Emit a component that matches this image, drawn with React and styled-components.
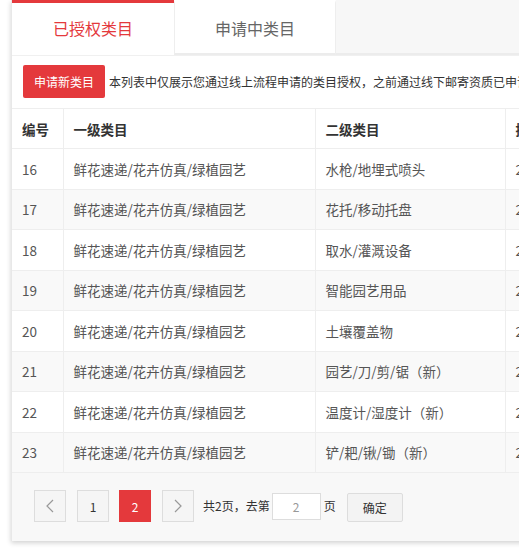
import React from "react";
import styled, { createGlobalStyle } from "styled-components";

const GlobalStyle = createGlobalStyle`
  html, body {
    margin: 0;
    padding: 0;
    background: #fff;
    overflow: hidden;
  }
  body {
    font-family: "Noto Sans CJK SC", "Microsoft YaHei", sans-serif;
    color: #333;
  }
`;

const Page = styled.div`
  width: 519px;
  height: 550px;
  overflow: hidden;
`;

const Panel = styled.div`
  margin-left: 11px;
  width: 640px;
  height: 541px;
  background: #fff;
  border-left: 1px solid #e8e8e8;
  box-shadow: 0 2px 5px rgba(0, 0, 0, 0.18);
  display: flex;
  flex-direction: column;
`;

const TabBar = styled.div`
  display: flex;
  height: 55px;
  background: #f7f7f7;
`;

const Tab = styled.div`
  width: 162px;
  box-sizing: border-box;
  display: flex;
  align-items: center;
  justify-content: center;
  background: #fff;
  font-size: 16px;
  color: ${(p) => (p.$active ? "#e4393c" : "#666")};
  border-top: 3px solid ${(p) => (p.$active ? "#e4393c" : "transparent")};
  border-left: ${(p) => (p.$active ? "none" : "1px solid #eee")};
  border-right: ${(p) => (p.$active ? "none" : "1px solid #eee")};
  border-bottom: ${(p) => (p.$active ? "none" : "2px solid #ececec")};
  padding-bottom: ${(p) => (p.$active ? "2px" : "0")};
`;

const TabFill = styled.div`
  flex: 1;
  border-bottom: 2px solid #ececec;
`;

const Toolbar = styled.div`
  display: flex;
  align-items: center;
  gap: 4px;
  padding: 9px 12px 10px 11px;
  border-top: 1px solid #f0f0f0;
  white-space: nowrap;
`;

const RedButton = styled.button`
  height: 33px;
  padding: 0 11px;
  border: none;
  border-radius: 2px;
  background: #e4393c;
  color: #fff;
  font-family: inherit;
  font-size: 12px;
`;

const Notice = styled.span`
  font-size: 12px;
  color: #333;
`;

const Table = styled.table`
  width: 100%;
  border-collapse: collapse;
  table-layout: fixed;
  font-size: 13.5px;
`;

const Th = styled.th`
  height: 39px;
  padding: 0 10px;
  text-align: left;
  font-weight: 600;
  color: #333;
  border: 1px solid #eee;
  border-left: ${(p) => (p.$first ? "none" : "1px solid #eee")};
  white-space: nowrap;
  overflow: hidden;
`;

const Row = styled.tr`
  background: ${(p) => (p.$odd ? "#f9f9f9" : "#fff")};
`;

const Td = styled.td`
  height: 39.5px;
  padding: 0 10px;
  color: #555;
  border: 1px solid #eee;
  border-left: ${(p) => (p.$first ? "none" : "1px solid #eee")};
  white-space: nowrap;
  overflow: hidden;
`;

const Pager = styled.div`
  flex: 1;
  background: #f8f8f8;
  display: flex;
  align-items: flex-start;
  padding: 17px 0 0 22px;
  font-size: 12px;
  color: #333;
`;

const PageBtn = styled.div`
  width: 32px;
  height: 32px;
  box-sizing: border-box;
  display: flex;
  align-items: center;
  justify-content: center;
  margin-right: ${(p) => p.$gap || 10}px;
  background: ${(p) => (p.$active ? "#e4393c" : "#f5f5f5")};
  border: 1px solid ${(p) => (p.$active ? "#e4393c" : "#ddd")};
  color: ${(p) => (p.$active ? "#fff" : "#333")};
  font-size: 12px;
`;

const PagerText = styled.span`
  line-height: 32px;
  margin-right: ${(p) => p.$gap || 0}px;
`;

const PageInput = styled.div`
  width: 49px;
  height: 27px;
  margin-top: 3px;
  margin-right: 3px;
  box-sizing: border-box;
  border: 1px solid #ddd;
  background: #fff;
  display: flex;
  align-items: center;
  justify-content: center;
  color: #999;
`;

const ConfirmBtn = styled.div`
  width: 56px;
  height: 29px;
  margin-top: 3px;
  box-sizing: border-box;
  border: 1px solid #ddd;
  border-radius: 2px;
  background: #f3f3f3;
  display: flex;
  align-items: center;
  justify-content: center;
  color: #333;
`;

const Chevron = ({ dir }) => (
  <svg width="8" height="14" viewBox="0 0 8 14" fill="none">
    <path
      d={dir === "left" ? "M7 1 L1 7 L7 13" : "M1 1 L7 7 L1 13"}
      stroke="#999"
      strokeWidth="1.2"
    />
  </svg>
);

const rows = [
  [16, "水枪/地埋式喷头", "2019-03-12"],
  [17, "花托/移动托盘", "2019-03-12"],
  [18, "取水/灌溉设备", "2019-03-12"],
  [19, "智能园艺用品", "2019-03-12"],
  [20, "土壤覆盖物", "2019-03-12"],
  [21, "园艺/刀/剪/锯（新）", "2019-03-12"],
  [22, "温度计/湿度计（新）", "2019-03-12"],
  [23, "铲/耙/锹/锄（新）", "2019-03-12"],
];

export default function App() {
  return (
    <Page>
      <GlobalStyle />
      <Panel>
        <TabBar>
          <Tab $active>已授权类目</Tab>
          <Tab>申请中类目</Tab>
          <TabFill />
        </TabBar>
        <Toolbar>
          <RedButton>申请新类目</RedButton>
          <Notice>
            本列表中仅展示您通过线上流程申请的类目授权，之前通过线下邮寄资质已申请的类目不在此展示
          </Notice>
        </Toolbar>
        <Table>
          <colgroup>
            <col style={{ width: 51 }} />
            <col style={{ width: 252 }} />
            <col style={{ width: 190 }} />
            <col />
          </colgroup>
          <thead>
            <tr>
              <Th $first>编号</Th>
              <Th>一级类目</Th>
              <Th>二级类目</Th>
              <Th>授权时间</Th>
            </tr>
          </thead>
          <tbody>
            {rows.map(([id, second, date], i) => (
              <Row key={id} $odd={i % 2 === 1}>
                <Td $first>{id}</Td>
                <Td>鲜花速递/花卉仿真/绿植园艺</Td>
                <Td>{second}</Td>
                <Td>{date}</Td>
              </Row>
            ))}
          </tbody>
        </Table>
        <Pager>
          <PageBtn $gap={11}>
            <Chevron dir="left" />
          </PageBtn>
          <PageBtn>1</PageBtn>
          <PageBtn $gap={11} $active>
            2
          </PageBtn>
          <PageBtn $gap={9}>
            <Chevron dir="right" />
          </PageBtn>
          <PagerText $gap={2}>共2页，去第</PagerText>
          <PageInput>2</PageInput>
          <PagerText $gap={11}>页</PagerText>
          <ConfirmBtn>确定</ConfirmBtn>
        </Pager>
      </Panel>
    </Page>
  );
}
